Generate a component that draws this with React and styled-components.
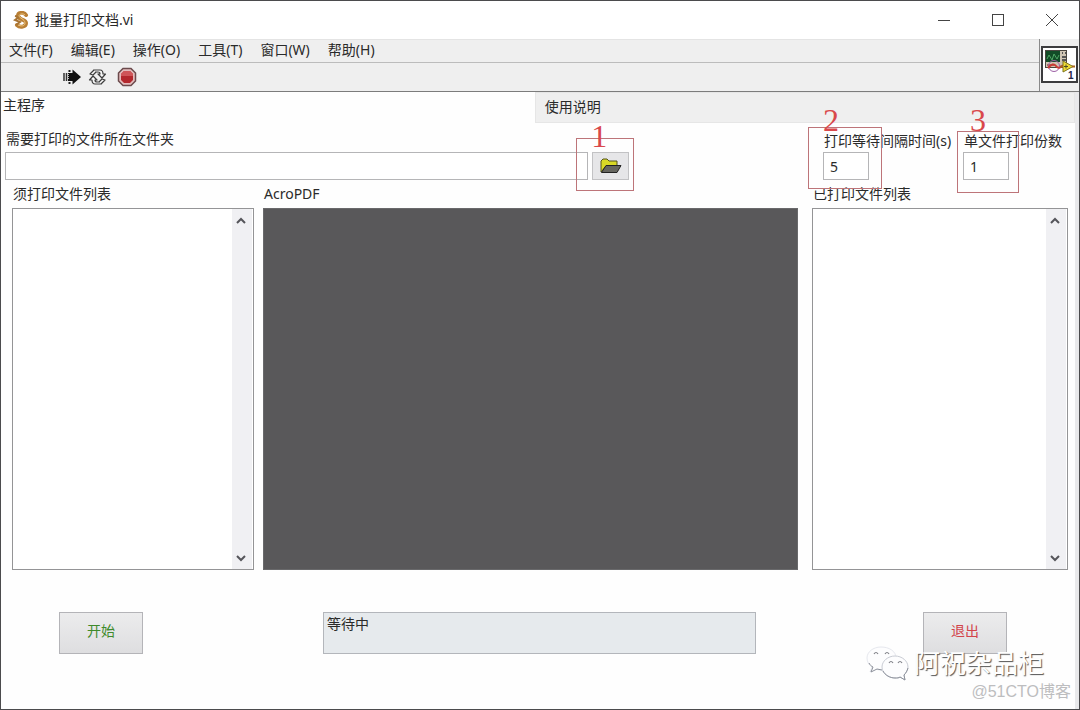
import React, { useState } from 'react';
import styled, { createGlobalStyle } from 'styled-components';

const GlobalStyle = createGlobalStyle`
  * {
    box-sizing: border-box;
  }
  body {
    margin: 0;
    background: #fff;
  }
  body, button, input {
    font-family: 'Noto Sans', 'Noto Sans CJK SC', sans-serif;
    font-size: 14px;
    line-height: 20px;
    color: #2a2a2a;
  }
  button {
    padding: 0;
    border: 0;
    background: none;
  }
`;

const Window = styled.div`
  position: relative;
  display: flex;
  flex-direction: column;
  min-width: 900px;
  min-height: 100vh;
  border: 1px solid #4b4b4d;
  background: #fefefe;
`;

const TitleBar = styled.header`
  display: flex;
  align-items: center;
  height: 38px;
  padding-left: 12px;
  background: #fff;
`;

const Title = styled.h1`
  flex: 1;
  margin: 0 0 0 5px;
  font-size: 14px;
  font-weight: 400;
`;

const WindowButton = styled.button`
  display: flex;
  align-items: center;
  justify-content: center;
  width: 54px;
  height: 36px;
`;

const Chrome = styled.div`
  display: flex;
  background: #efefef;
  border-bottom: 1px solid #7c7c7c;
`;

const Bars = styled.div`
  flex: 1;
`;

const MenuBar = styled.nav`
  display: flex;
  align-items: flex-start;
  gap: 18px;
  height: 24px;
  padding-left: 8px;
  border-top: 1px solid #e4e4e4;
  border-bottom: 1px solid #bcbcbc;
`;

const ToolBar = styled.div`
  display: flex;
  align-items: center;
  height: 28px;
  padding-left: 60px;
`;

const ToolButton = styled.button`
  display: flex;
  align-items: center;
  justify-content: center;
  width: ${(props) => props.$width}px;
  height: 24px;
`;

const ViPanel = styled.div`
  width: 40px;
  padding-top: 7px;
  padding-left: 1px;
  border-left: 1px solid #8a8a8a;
`;

const ViIcon = styled.div`
  width: 37px;
  height: 37px;
  border: 2px solid #3c3c3e;
  background: #fff;

  svg {
    display: block;
  }
`;

const Body = styled.main`
  flex: 1;
  display: flex;
  flex-direction: column;
  border-right: 4px solid #e9e9eb;
`;

const Tabs = styled.div`
  display: flex;
  height: 31px;
`;

const Tab = styled.button`
  display: flex;
  width: ${(props) => (props.$active ? '49.7%' : '50.3%')};
  padding: ${(props) => (props.$active ? '2px 1px' : '4px 9px')};
  background: ${(props) => (props.$active ? '#fefefe' : '#efefef')};
  border: 1px solid ${(props) => (props.$active ? '#fefefe' : '#e6e6e6')};
`;

const PathRow = styled.div`
  display: flex;
  align-items: flex-end;
  height: 57px;
  padding-left: 4px;
`;

const Field = styled.div`
  position: relative;
  width: ${(props) => props.$width};

  label {
    display: block;
    height: ${(props) => props.$labelHeight || 23}px;
    padding-left: 1px;
    white-space: nowrap;
  }
`;

const TextBox = styled.input`
  display: block;
  width: ${(props) => props.$width};
  height: 28px;
  padding: 0 6px;
  border: 1px solid #b5b5b7;
  background: #fff;
`;

const Browse = styled.div`
  position: relative;
  margin-left: 4px;
`;

const BrowseButton = styled.button`
  display: flex;
  align-items: center;
  justify-content: center;
  width: 37px;
  height: 28px;
  border: 1px solid #c2c2c4;
  background: #e6e6e8;
`;

const Numbers = styled.div`
  display: flex;
  margin-left: auto;
  padding-right: 11px;
`;

// red callout drawn over a control
const Mark = styled.span`
  position: absolute;
  top: ${(props) => props.$top}px;
  left: ${(props) => props.$left}px;
  width: ${(props) => props.$width}px;
  height: ${(props) => props.$height}px;
  border: 1px solid #bd7479;
  pointer-events: none;

  b {
    position: absolute;
    bottom: calc(100% - ${(props) => props.$overlap}px);
    left: ${(props) => (props.$left < -10 ? 14 : 12)}px;
    font-family: 'Liberation Serif', serif;
    font-size: 32px;
    line-height: 22px;
    font-weight: 400;
    color: #d9484b;
  }
`;

const Panels = styled.div`
  flex: 1;
  display: grid;
  grid-template-columns: 242px 1fr 257px;
  column-gap: 9px;
  padding: 4px 6px 0 11px;
`;

const Panel = styled.section`
  display: flex;
  flex-direction: column;
  padding-right: ${(props) => props.$end || 0}px;

  h2 {
    margin: 0;
    height: 24px;
    padding-left: 1px;
    font-size: 14px;
    font-weight: 400;
  }
`;

const ListBox = styled.div`
  flex: 1;
  display: flex;
  justify-content: flex-end;
  min-height: 160px;
  padding-right: 1px;
  border: 1px solid #949496;
  background: #fff;
`;

const ScrollBar = styled.div`
  display: flex;
  flex-direction: column;
  justify-content: space-between;
  width: 20px;
  background: #f0f0f3;
`;

const ScrollButton = styled.button`
  display: flex;
  align-items: center;
  justify-content: center;
  height: 23px;
  padding-right: 2px;
`;

const PdfView = styled.div`
  flex: 1;
  border: 1px solid #69696b;
  background: #59585a;
`;

const Footer = styled.footer`
  display: flex;
  height: 139px;
  padding: 42px 68px 0 58px;
`;

const ActionButton = styled.button`
  width: 84px;
  height: 42px;
  padding-bottom: 4px;
  border: 1px solid #b4b4b8;
  background: linear-gradient(#ececed, #dedee0);
  color: ${(props) => props.$color};
`;

const Status = styled.output`
  flex: 1;
  height: 42px;
  margin: 0 167px 0 180px;
  padding: 1px 3px;
  border: 1px solid #b3b6bb;
  background: #e6eaed;
`;

const Watermark = styled.div`
  position: absolute;
  right: 8px;
  bottom: 6px;
  display: flex;
  flex-direction: column;
  align-items: flex-end;
  pointer-events: none;
`;

const Account = styled.div`
  display: flex;
  align-items: center;
  gap: 5px;
  padding-right: 27px;
  font-size: 26px;
  line-height: 36px;
  color: #fff;
  text-shadow: 1px 1px 1px #555;
`;

const Site = styled.div`
  font-family: 'Liberation Sans', 'Noto Sans CJK SC', sans-serif;
  font-size: 16px;
  line-height: 22px;
  color: #bdbdbf;
`;

const menus = ['文件(F)', '编辑(E)', '操作(O)', '工具(T)', '窗口(W)', '帮助(H)'];

const AppLogo = () => (
  <svg width="17" height="18" viewBox="0 0 17 18" fill="none">
    <path
      d="M13 4C11 1 5 1 5 5s8 3 8 7-6 5-9 2"
      stroke="#b97f35"
      strokeWidth="4"
      strokeLinecap="round"
    />
    <path d="M2 5l4 1-4 3 5 2-4 3" stroke="#a87434" strokeWidth="2" />
    <path d="M12 4C10 2 6 3 6 5s6 3 6 7-5 3-7 2" stroke="#edc57f" />
  </svg>
);

const RunIcon = () => (
  <svg width="20" height="18" viewBox="0 0 20 18">
    <path d="M2 5v8M4.500 5v8" stroke="#333" strokeWidth="1.500" />
    <path d="M6 5h4.500V1.500L19 9l-8.500 7.500V13H6z" fill="#111" />
    <path
      d="M7.500 2v2M7.500 14v2"
      stroke="#222"
      strokeWidth="2"
    />
    <path d="M6.500 6v6" stroke="#bbb" strokeDasharray="1 1" />
  </svg>
);

const RunLoopIcon = () => (
  <svg
    width="19"
    height="18"
    viewBox="0 0 19 18"
    fill="#f8f8f8"
    stroke="#3d3d3d"
    strokeWidth="1.200"
    strokeLinejoin="round"
  >
    <path d="M6 2h6q3 0 3 4h2.500L14 10l-4-4h2q0-2-2-2H7z" />
    <path d="M13 16H7q-3 0-3-4H1.500L5 8l4 4H7q0 2 2 2h3z" />
    <path d="M6 2 2 6l3 1 3-3M13 16l4-4-3-1-3 3" />
  </svg>
);

const AbortIcon = () => (
  <svg width="20" height="20" viewBox="0 0 20 20">
    <path
      d="M6 1.500h8L18.500 6v8L14 18.500H6L1.500 14V6z"
      fill="#e3bcbc"
      stroke="#6b4a4c"
      strokeWidth="1.500"
    />
    <path d="M7 4h6l3 3v6l-3 3H7l-3-3V7z" fill="#b3282d" />
    <path d="M7 4h6l3 3v2H4V7z" fill="#cf5558" />
  </svg>
);

const ScopeIcon = () => (
  <svg width="33" height="33" viewBox="0 0 33 33">
    <rect x="2.500" y="2.500" width="21" height="17" fill="#cfc5b4" stroke="#4a4640" />
    <rect x="3" y="3" width="14" height="11" fill="#124c27" />
    <path d="M4 11l2-4 3 5 2-6 3 5 2-4" stroke="#4fa765" fill="none" />
    <path d="M19 5h1M22 5h1M19 9h4M19 12h4" stroke="#555" strokeWidth="2" />
    <path d="M4 17h7" stroke="#ad6e62" strokeWidth="2" />
    <circle cx="11" cy="18" r="5.500" fill="none" stroke="#9c5fa5" />
    <path d="M5 20q5-6 8-2t7-1" stroke="#c93a34" strokeWidth="2" fill="none" />
    <path d="M20 13l10 5.500-10 5.500z" fill="#f0dc35" stroke="#7c741c" />
    <path d="M17 18.500h3M29 18.500h3" stroke="#a8651f" strokeWidth="2" />
    <path d="M21 18.500h4M23 16.500v4" stroke="#4d4a22" />
    <text
      x="25"
      y="31"
      fontFamily="Liberation Sans, sans-serif"
      fontSize="10"
      fontWeight="700"
      fill="#25254a"
    >
      1
    </text>
  </svg>
);

const FolderIcon = () => (
  <svg width="22" height="18" viewBox="0 0 22 18">
    <path d="M1 15V4l2-2h4l2 2h8v5H6z" fill="#d9d926" stroke="#55551c" />
    <path d="M1.500 15.500 6 8.500h15l-4 7z" fill="#66665f" stroke="#222" />
  </svg>
);

const Chevron = ({ down }) => (
  <svg width="10" height="8" viewBox="0 0 10 8" fill="none">
    <path
      d={down ? 'M1 2l4 4 4-4' : 'M1 6l4-4 4 4'}
      stroke="#55555a"
      strokeWidth="2"
    />
  </svg>
);

const WechatLogo = () => (
  <svg width="44" height="36" viewBox="0 0 44 36" fill="#fdfdfe">
    <path
      d="M16 2C8 2 2 7 2 13c0 4 2 7 5 9l-2 5 6-3c2 1 4 1 7 1 7-1 13-5 13-12S24 2 16 2z"
      stroke="#e6e8ee"
    />
    <path
      d="M4 18c1 2 2 3 4 4l-2 5 6-3 5 1"
      stroke="#8d919b"
    />
    <path
      d="M30 11c-7 0-13 5-13 11s6 11 13 11c2 0 4 0 5-1l5 3-1-5c2-2 4-5 4-8 0-6-6-11-13-11z"
      stroke="#c9ccd4"
    />
    <path
      d="M18 26c2 4 7 7 12 7 2 0 4 0 5-1l5 3-1-5c2-2 3-4 4-7"
      fill="none"
      stroke="#8d919b"
    />
    <path
      d="M9 9q2-3 4 0M20 9q2-3 4 0M24 18q2-3 4 0M33 18q2-3 4 0"
      fill="none"
      stroke="#808288"
      strokeWidth="1.200"
    />
  </svg>
);

const FileList = ({ title, end }) => (
  <Panel $end={end}>
    <h2>{title}</h2>
    <ListBox role="listbox" aria-label={title}>
      <ScrollBar>
        <ScrollButton aria-label="向上滚动">
          <Chevron />
        </ScrollButton>
        <ScrollButton aria-label="向下滚动">
          <Chevron down />
        </ScrollButton>
      </ScrollBar>
    </ListBox>
  </Panel>
);

const App = () => {
  const [folder, setFolder] = useState('');
  const [delay, setDelay] = useState('5');
  const [copies, setCopies] = useState('1');

  return (
    <Window>
      <GlobalStyle />
      <TitleBar>
        <AppLogo />
        <Title>批量打印文档.vi</Title>
        <WindowButton aria-label="最小化">
          <svg width="12" height="12" stroke="#444">
            <path d="M0 6.500h12" />
          </svg>
        </WindowButton>
        <WindowButton aria-label="最大化">
          <svg width="12" height="12" stroke="#444" fill="none">
            <rect x="0.500" y="0.500" width="11" height="11" />
          </svg>
        </WindowButton>
        <WindowButton aria-label="关闭">
          <svg width="12" height="12" stroke="#444">
            <path d="M0 0l12 12M12 0L0 12" />
          </svg>
        </WindowButton>
      </TitleBar>

      <Chrome>
        <Bars>
          <MenuBar>
            {menus.map((menu) => (
              <button key={menu}>{menu}</button>
            ))}
          </MenuBar>
          <ToolBar>
            <ToolButton aria-label="运行" $width={22}>
              <RunIcon />
            </ToolButton>
            <ToolButton aria-label="连续运行" $width={28}>
              <RunLoopIcon />
            </ToolButton>
            <ToolButton aria-label="中止" $width={32}>
              <AbortIcon />
            </ToolButton>
          </ToolBar>
        </Bars>
        <ViPanel>
          <ViIcon>
            <ScopeIcon />
          </ViIcon>
        </ViPanel>
      </Chrome>

      <Body>
        <Tabs role="tablist">
          <Tab role="tab" aria-selected="true" $active>
            主程序
          </Tab>
          <Tab role="tab" aria-selected="false">
            使用说明
          </Tab>
        </Tabs>

        <PathRow>
          <Field $width="54.500%">
            <label htmlFor="folder">需要打印的文件所在文件夹</label>
            <TextBox
              id="folder"
              $width="100%"
              value={folder}
              onChange={(e) => setFolder(e.target.value)}
            />
          </Field>
          <Browse>
            <BrowseButton aria-label="浏览">
              <FolderIcon />
            </BrowseButton>
            <Mark $top={-14} $left={-16} $width={58} $height={53} $overlap={8}>
              <b>1</b>
            </Mark>
          </Browse>
          <Numbers>
            <Field $width="140px" $labelHeight={21}>
              <label htmlFor="delay">打印等待间隔时间(s)</label>
              <TextBox
                id="delay"
                $width="46px"
                value={delay}
                onChange={(e) => setDelay(e.target.value)}
              />
              <Mark $top={-4} $left={-15} $width={74} $height={62} $overlap={3}>
                <b>2</b>
              </Mark>
            </Field>
            <Field $width="101px" $labelHeight={21}>
              <label htmlFor="copies">单文件打印份数</label>
              <TextBox
                id="copies"
                $width="46px"
                value={copies}
                onChange={(e) => setCopies(e.target.value)}
              />
              <Mark $top={0} $left={-6} $width={62} $height={62} $overlap={-1}>
                <b>3</b>
              </Mark>
            </Field>
          </Numbers>
        </PathRow>

        <Panels>
          <FileList title="须打印文件列表" />
          <Panel $end={5}>
            <h2>AcroPDF</h2>
            <PdfView />
          </Panel>
          <FileList title="已打印文件列表" end={1} />
        </Panels>

        <Footer>
          <ActionButton $color="#3f8a2b">开始</ActionButton>
          <Status>等待中</Status>
          <ActionButton $color="#d2444a">退出</ActionButton>
        </Footer>
      </Body>

      <Watermark>
        <Account>
          <WechatLogo />
          阿祝杂品柜
        </Account>
        <Site>@51CTO博客</Site>
      </Watermark>
    </Window>
  );
};

export default App;
